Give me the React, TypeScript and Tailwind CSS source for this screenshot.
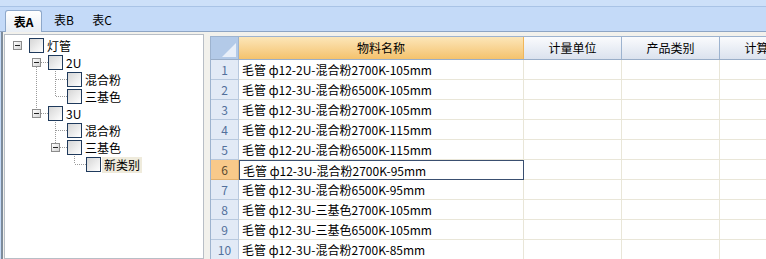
import React from 'react';

const font = { fontFamily: '"Noto Sans CJK SC", "Liberation Sans", sans-serif' };

type Node = { label: string; level: number; expander?: boolean; highlight?: boolean };

const treeNodes: Node[] = [
  { label: '灯管', level: 0, expander: true },
  { label: '2U', level: 1, expander: true },
  { label: '混合粉', level: 2 },
  { label: '三基色', level: 2 },
  { label: '3U', level: 1, expander: true },
  { label: '混合粉', level: 2 },
  { label: '三基色', level: 2, expander: true },
  { label: '新类别', level: 3, highlight: true },
];

const rows = [
  '毛管 ф12-2U-混合粉2700K-105mm',
  '毛管 ф12-3U-混合粉6500K-105mm',
  '毛管 ф12-3U-混合粉2700K-105mm',
  '毛管 ф12-2U-混合粉2700K-115mm',
  '毛管 ф12-2U-混合粉6500K-115mm',
  '毛管 ф12-3U-混合粉2700K-95mm',
  '毛管 ф12-3U-混合粉6500K-95mm',
  '毛管 ф12-3U-三基色2700K-105mm',
  '毛管 ф12-3U-三基色6500K-105mm',
  '毛管 ф12-3U-混合粉2700K-85mm',
];

const Expander = () => (
  <span className="w-[9px] h-[9px] border border-[#8c8c8c] bg-gradient-to-br from-white to-[#d4d4d4] flex items-center justify-center">
    <span className="w-[5px] h-px bg-[#222]" />
  </span>
);

const CheckBox = () => (
  <span className="w-[15px] h-[15px] border border-[#1f3a5c] bg-gradient-to-br from-[#d6d6d6] to-white shrink-0" />
);

// dotted connector lines, coords relative to the tree panel's inner box
const TreeLines = () => {
  const line = { stroke: '#9a9a9a', strokeWidth: 1, strokeDasharray: '1 1' };
  return (
    <svg className="absolute left-0 top-0 pointer-events-none" width="198" height="224">
      <line x1="31.5" y1="32" x2="31.5" y2="74" {...line} />
      <line x1="36" y1="27.5" x2="43" y2="27.5" {...line} />
      <line x1="36" y1="78.5" x2="43" y2="78.5" {...line} />
      <line x1="50.5" y1="32" x2="50.5" y2="61" {...line} />
      <line x1="51" y1="44.5" x2="62" y2="44.5" {...line} />
      <line x1="51" y1="61.5" x2="62" y2="61.5" {...line} />
      <line x1="50.5" y1="83" x2="50.5" y2="108" {...line} />
      <line x1="51" y1="95.5" x2="62" y2="95.5" {...line} />
      <line x1="55" y1="112.5" x2="62" y2="112.5" {...line} />
      <line x1="69.5" y1="117" x2="69.5" y2="129" {...line} />
      <line x1="70" y1="129.5" x2="81" y2="129.5" {...line} />
    </svg>
  );
};

const Tree = () => (
  <div className="relative w-[200px] h-full bg-white border border-[#b8bec6] pt-[2px]">
    <TreeLines />
    {treeNodes.map((n, i) => (
      <div key={i} className="relative h-[17px] flex items-center" style={{ paddingLeft: 8 + n.level * 19 }}>
        <span className="w-[16px] h-[9px] flex">{n.expander ? <Expander /> : null}</span>
        <CheckBox />
        <span
          className={`ml-px px-[2px] text-[12px] leading-[16px] text-black ${n.highlight ? 'bg-[#efebdc]' : ''}`}
        >
          {n.label}
        </span>
      </div>
    ))}
  </div>
);

const cols = [
  { title: '物料名称', w: 'w-[285px]', active: true },
  { title: '计量单位', w: 'w-[98px]' },
  { title: '产品类别', w: 'w-[98px]' },
  { title: '计算方式', w: 'w-[98px]' },
];

const Grid = () => (
  <div className="flex-1 overflow-hidden border-l border-t border-[#9db3cf] bg-white">
    <div className="flex h-[23px] border-b border-[#9aaec8]">
      <div className="relative w-[28px] shrink-0 bg-[#b3cae8] border-r border-[#9db3cf]">
        <div className="absolute right-[2px] bottom-[2px] w-0 h-0 border-l-[14px] border-l-transparent border-b-[14px] border-b-[#e8eff9]" />
      </div>
      {cols.map((c) => (
        <div
          key={c.title}
          className={`${c.w} shrink-0 border-r text-[12px] flex items-center justify-center whitespace-nowrap ${
            c.active
              ? 'bg-gradient-to-b from-[#fce6b8] to-[#f4c26c] border-[#f0b65a]'
              : 'bg-gradient-to-b from-[#fafbfd] to-[#dbe2ee] border-[#9db3cf]'
          }`}
        >
          {c.title}
        </div>
      ))}
    </div>
    {rows.map((r, i) => {
      const sel = i === 5;
      return (
        <div key={i} className="flex h-[20px]">
          <div
            className={`w-[28px] shrink-0 border-r border-b text-[12px] flex items-center justify-center ${
              sel ? 'bg-[#f8c98a] text-[#5b4a30] border-[#e0b070]' : 'bg-[#e2eaf6] text-[#52709c] border-[#b7c8de]'
            }`}
          >
            {i + 1}
          </div>
          <div
            className={`w-[285px] shrink-0 text-[12px] leading-[19px] pl-[3px] whitespace-nowrap ${
              sel ? 'border border-[#3a4f70]' : 'border-r border-b border-[#e9e6d8]'
            }`}
          >
            {r}
          </div>
          <div className="w-[98px] shrink-0 border-r border-b border-[#e9e6d8]" />
          <div className="w-[98px] shrink-0 border-r border-b border-[#e9e6d8]" />
          <div className="w-[98px] shrink-0 border-r border-b border-[#e9e6d8]" />
        </div>
      );
    })}
  </div>
);

export default function App() {
  return (
    <div className="w-[766px] h-[259px] overflow-hidden flex flex-col bg-[#c4daf8] text-black" style={font}>
      <div className="h-[7px] bg-[#cde0f9] border-b border-[#a9c3e6]" />
      <div className="h-[25px] flex items-end pl-[5px] gap-[6px] border-b border-[#8ea5c4]">
        <div className="h-[22px] w-[37px] -mb-px rounded-t-[3px] border border-b-0 border-[#8ea8ca] bg-gradient-to-b from-white to-[#e9eef5] text-[12px] font-bold flex items-center justify-center">
          表A
        </div>
        <div className="h-[22px] w-[32px] text-[12px] flex items-center justify-center">表B</div>
        <div className="h-[22px] w-[32px] text-[12px] flex items-center justify-center">表C</div>
      </div>
      <div className="flex-1 flex gap-[6px] pl-px pt-[1px] bg-[#f2f1ec] border-l-2 border-[#7d8b9a] ml-px min-h-0">
        <div className="pt-px">
          <Tree />
        </div>
        <div className="flex-1 flex flex-col pt-[3px] min-w-0">
          <Grid />
        </div>
      </div>
    </div>
  );
}
